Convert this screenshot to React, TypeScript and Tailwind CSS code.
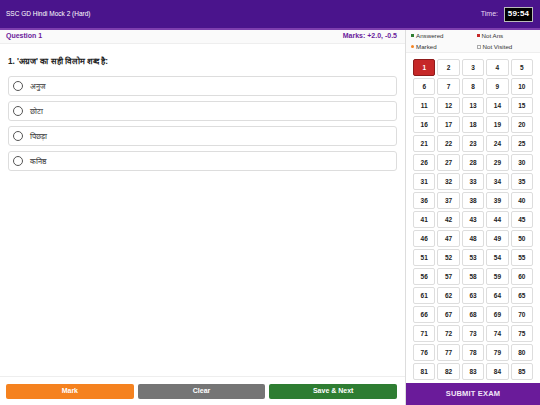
import React from 'react'

const options = ['अनुज', 'छोटा', 'पिछड़ा', 'कनिष्ठ']
// only the part of the palette that is visible without scrolling
const questions = Array.from({ length: 85 }, (_, i) => i + 1)

export default function App() {
  return (
    <div
      className="w-[540px] h-[405px] flex flex-col overflow-hidden bg-white text-[#222]"
      style={{ fontFamily: '"Liberation Sans", Arial, sans-serif' }}
    >
      {/* Header */}
      <header className="h-[30px] shrink-0 flex items-center justify-between pl-[6px] pr-[7px] bg-[#4a148c] border-b-2 border-[#7e3fae]">
        <span className="text-[6.5px] text-white">SSC GD Hindi Mock 2 (Hard)</span>
        <div className="flex items-center gap-[6px]">
          <span className="text-[7px] text-[#e8dcf5]">Time:</span>
          <span className="h-[15px] w-[29px] flex items-center justify-center bg-black border border-[#bbb] text-white text-[8px] font-bold tracking-wide">
            59:54
          </span>
        </div>
      </header>

      <div className="flex flex-1 min-h-0">
        {/* Main */}
        <main className="flex-1 flex flex-col min-w-0">
          <div className="h-[14px] shrink-0 flex items-center justify-between px-[6px] pr-[8px] bg-[#fafafa] border-b border-[#eee]">
            <span className="text-[7px] font-bold text-[#6a1b9a]">Question 1</span>
            <span className="text-[7px] font-bold text-[#6a1b9a]">Marks: +2.0, -0.5</span>
          </div>

          <div className="flex-1 px-[8px] pt-[12px]">
            <p className="text-[8.2px] font-bold mb-[8px]">1. 'अग्रज' का सही विलोम शब्द है:</p>
            <div className="flex flex-col gap-[5px]">
              {options.map((o) => (
                <div
                  key={o}
                  className="h-[20px] flex items-center gap-[7px] px-[4px] border border-[#ddd] rounded-[3px] bg-white"
                >
                  <span className="w-[10px] h-[10px] rounded-full border border-[#555] bg-white" />
                  <span className="text-[7.5px] text-[#333]">{o}</span>
                </div>
              ))}
            </div>
          </div>

          <footer className="h-[29px] shrink-0 flex items-center gap-[4px] px-[6px] pr-[8px] border-t border-[#eee]">
            <button className="flex-1 h-[15px] rounded-[2px] bg-[#f5821f] text-white text-[7px] font-bold">
              Mark
            </button>
            <button className="flex-1 h-[15px] rounded-[2px] bg-[#757575] text-white text-[7px] font-bold">
              Clear
            </button>
            <button className="flex-1 h-[15px] rounded-[2px] bg-[#2e7d32] text-white text-[7px] font-bold">
              Save &amp; Next
            </button>
          </footer>
        </main>

        {/* Sidebar */}
        <aside className="w-[135px] shrink-0 flex flex-col border-l border-[#ddd] bg-white">
          <div className="h-[23px] shrink-0 grid grid-cols-2 content-center gap-y-[2px] pl-[5px] bg-[#fafafa] border-b border-[#eee] text-[6.2px] text-[#333]">
            <div className="flex items-center gap-[2px]">
              <span className="w-[3px] h-[3px] bg-[#2e7d32]" />
              Answered
            </div>
            <div className="flex items-center gap-[2px] pl-[1px]">
              <span className="w-[3px] h-[3px] bg-[#c62828]" />
              Not Ans
            </div>
            <div className="flex items-center gap-[2px]">
              <span className="w-[3px] h-[3px] rounded-full bg-[#f5821f]" />
              Marked
            </div>
            <div className="flex items-center gap-[2px] pl-[1px]">
              <span className="w-[4px] h-[4px] border border-[#aaa]" />
              Not Visited
            </div>
          </div>

          <div className="flex-1 min-h-0 overflow-hidden px-[7px] pt-[6px]">
            <div className="grid grid-cols-5 gap-x-[2px] gap-y-[2px]">
              {questions.map((n) => (
                <div
                  key={n}
                  className={
                    n === 1
                      ? 'h-[17px] flex items-center justify-center rounded-[2px] bg-[#c62828] border border-[#8e1b1b] text-white text-[6.5px] font-bold'
                      : 'h-[17px] flex items-center justify-center rounded-[2px] bg-white border border-[#ddd] text-[#222] text-[6.5px] font-bold'
                  }
                >
                  {n}
                </div>
              ))}
            </div>
          </div>

          <button className="h-[22px] shrink-0 bg-[#6a1b9a] text-[#f1e4f7] text-[7.5px] font-bold tracking-wide">
            SUBMIT EXAM
          </button>
        </aside>
      </div>
    </div>
  )
}
